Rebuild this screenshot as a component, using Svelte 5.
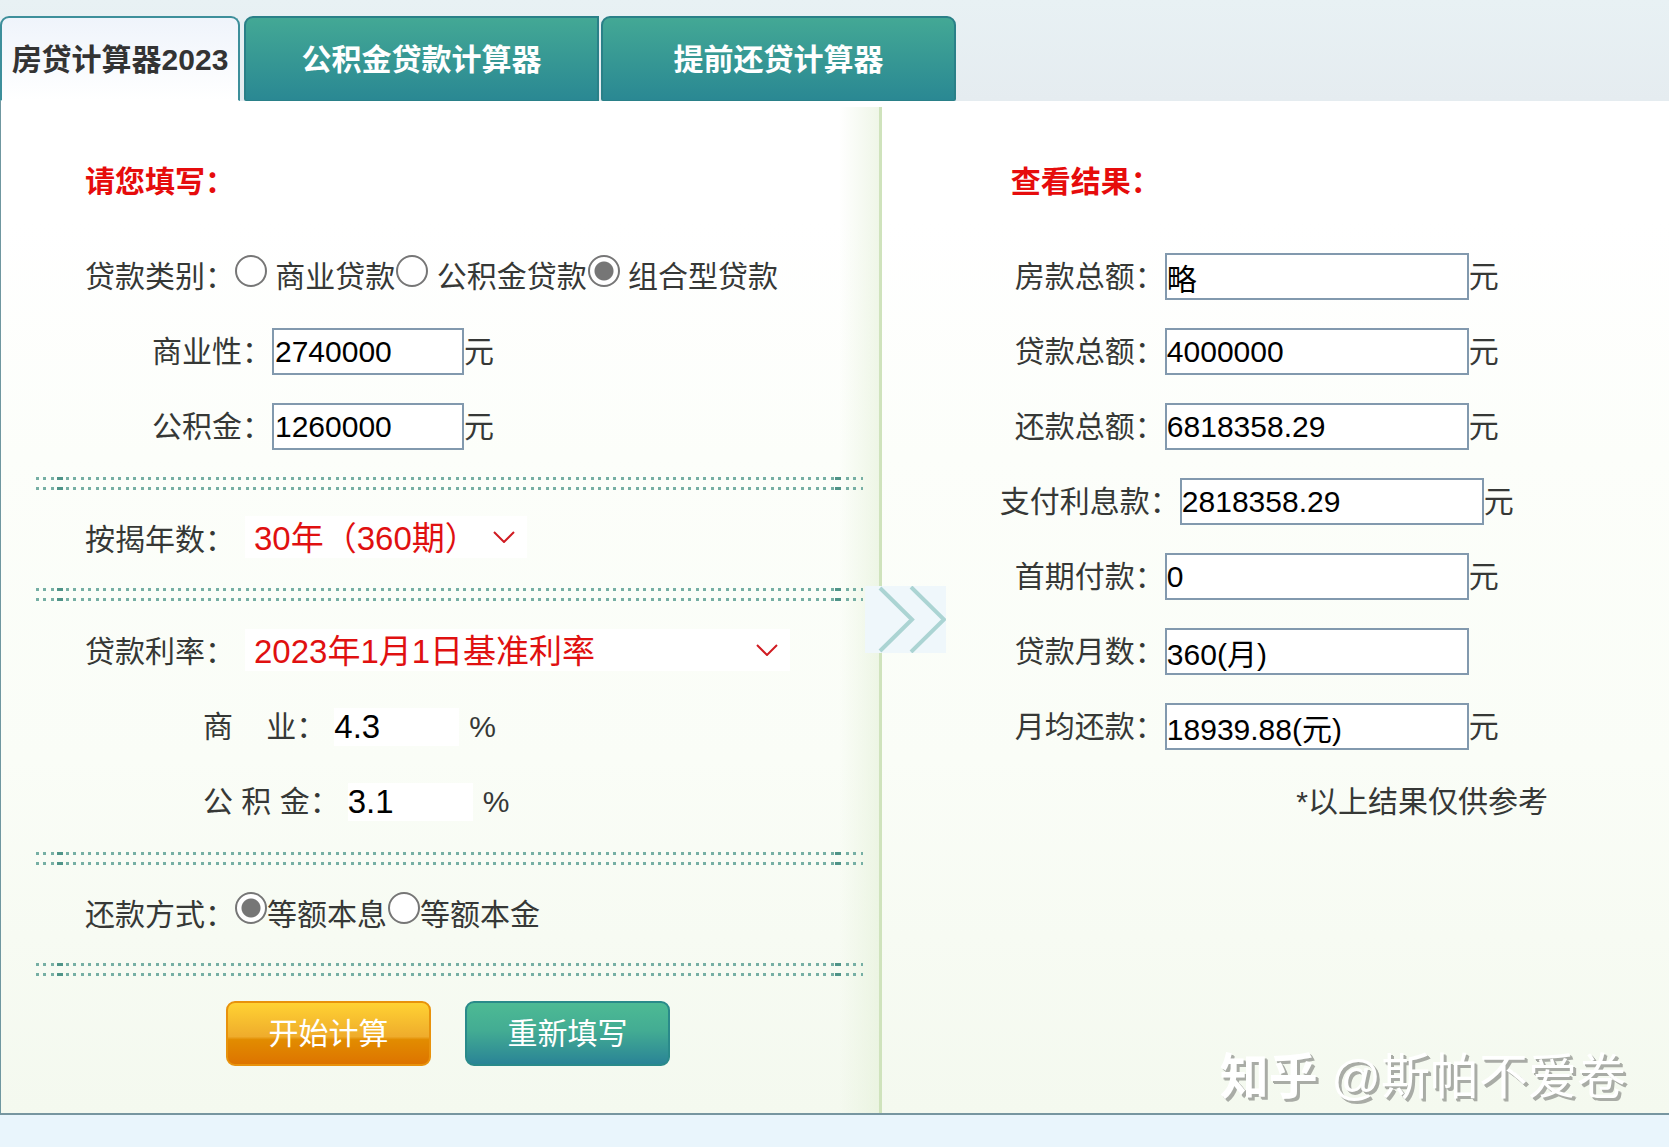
<script>
  const tabs = ['房贷计算器2023', '公积金贷款计算器', '提前还贷计算器'];
  const loanTypes = ['商业贷款', '公积金贷款', '组合型贷款'];
  const methods = ['等额本息', '等额本金'];
  const years = [30, 25, 20, 15, 10, 5];
  const rateSets = ['2023年1月1日基准利率', '2022年1月1日基准利率'];

  let active = $state(0);
  let loanType = $state('组合型贷款');
  let method = $state('等额本息');
  let term = $state(30);
  let rateSet = $state(rateSets[0]);
  let business = $state('2740000');
  let fund = $state('1260000');
  let businessRate = $state('4.3');
  let fundRate = $state('3.1');

  let results = $state([
    { id: 'house', label: '房款总额', value: '略', unit: '元' },
    { id: 'loan', label: '贷款总额', value: '4000000', unit: '元' },
    { id: 'repay', label: '还款总额', value: '6818358.29', unit: '元' },
    { id: 'interest', label: '支付利息款', value: '2818358.29', unit: '元' },
    { id: 'first', label: '首期付款', value: '0', unit: '元' },
    { id: 'months', label: '贷款月数', value: '360(月)', unit: '' },
    { id: 'monthly', label: '月均还款', value: '18939.88(元)', unit: '元' }
  ]);

  // total paid back over n months
  function total(sum, rate, n) {
    const r = rate / 1200;
    if (!r) return sum;
    if (method === '等额本金') return sum + (sum * r * (n + 1)) / 2;
    const k = Math.pow(1 + r, n);
    return (sum * r * k * n) / (k - 1);
  }

  function calculate(e) {
    e.preventDefault();
    const n = term * 12;
    const b = loanType === '公积金贷款' ? 0 : Number(business) || 0;
    const f = loanType === '商业贷款' ? 0 : Number(fund) || 0;
    const all = total(b, Number(businessRate), n) + total(f, Number(fundRate), n);
    results[1].value = String(b + f);
    results[2].value = all.toFixed(2);
    results[3].value = (all - b - f).toFixed(2);
    results[5].value = `${n}(月)`;
    results[6].value = `${(all / n).toFixed(2)}(元)`;
  }

  function clear() {
    business = '';
    fund = '';
    for (const r of results) r.value = '';
  }
</script>

{#snippet chevron()}
  <svg class="chevron" viewBox="0 0 22 12" aria-hidden="true"><path d="M1 1l10 10L21 1" /></svg>
{/snippet}

<div class="page">
  <nav class="tabs">
    {#each tabs as tab, i}
      <button type="button" class="tab" class:active={active === i} onclick={() => (active = i)}>{tab}</button>
    {/each}
  </nav>

  <main class="panels">
    <form class="fill" onsubmit={calculate}>
      <h2>请您填写：</h2>

      <div class="row" role="radiogroup" aria-label="贷款类别">
        <span>贷款类别：</span>
        {#each loanTypes as t}
          <label class="choice"><input type="radio" name="type" value={t} bind:group={loanType} />&nbsp;{t}</label>
        {/each}
      </div>
      <div class="row sub">
        <label for="business">商业性：</label>
        <input class="box" id="business" type="text" bind:value={business} />
        <span>元</span>
      </div>
      <div class="row sub">
        <label for="fund">公积金：</label>
        <input class="box" id="fund" type="text" bind:value={fund} />
        <span>元</span>
      </div>

      <div class="dots"></div>

      <div class="row short">
        <label for="years">按揭年数：</label>
        <div class="pick">
          <select id="years" bind:value={term}>
            {#each years as y}<option value={y}>{y}年（{y * 12}期）</option>{/each}
          </select>
          {@render chevron()}
        </div>
      </div>

      <div class="dots"></div>

      <div class="row">
        <label for="rates">贷款利率：</label>
        <div class="pick wide">
          <select id="rates" bind:value={rateSet}>
            {#each rateSets as r}<option value={r}>{r}</option>{/each}
          </select>
          {@render chevron()}
        </div>
      </div>
      <div class="row rate">
        <label for="business-rate">商&nbsp;&nbsp;&nbsp;&nbsp;业：</label>
        <input class="plain" id="business-rate" type="text" bind:value={businessRate} />
        <span>%</span>
      </div>
      <div class="row rate">
        <label for="fund-rate">公&nbsp;积&nbsp;金：</label>
        <input class="plain" id="fund-rate" type="text" bind:value={fundRate} />
        <span>%</span>
      </div>

      <div class="dots"></div>

      <div class="row short" role="radiogroup" aria-label="还款方式">
        <span>还款方式：</span>
        {#each methods as m}
          <label class="choice"><input type="radio" name="method" value={m} bind:group={method} />{m}</label>
        {/each}
      </div>

      <div class="dots"></div>

      <div class="actions">
        <button type="submit" class="btn go">开始计算</button>
        <button type="button" class="btn" onclick={clear}>重新填写</button>
      </div>
    </form>

    <section class="results">
      <h2>查看结果：</h2>
      {#each results as r (r.id)}
        <div class="row">
          <label for={r.id}>{r.label}：</label>
          <input class="box" id={r.id} type="text" readonly value={r.value} />
          <span class="unit">{r.unit}</span>
        </div>
      {/each}
      <p class="note">*以上结果仅供参考</p>
    </section>

    <svg class="arrows" viewBox="0 0 81 67" aria-hidden="true">
      <path d="M15 2l32 31.500L15 65" />
      <path d="M46 1l33 32.500L46 66" />
    </svg>

    <div class="watermark"><b>知乎</b> @斯帕不爱卷</div>
  </main>

  <footer></footer>
</div>

<style>
  :global(body) { margin: 0; }

  .page {
    min-height: 100vh;
    display: flex; flex-direction: column;
    font: 30px/45px 'Liberation Sans', 'Noto Sans CJK SC', sans-serif;
    color: #363836;
  }
  button, input, select { font-family: inherit; line-height: inherit; box-sizing: border-box; margin: 0; }

  /* tabs */
  .tabs {
    display: flex;
    padding-top: 16px;
    background: linear-gradient(#e8f1f4, #e5ecf0);
  }
  .tab {
    width: 355px; height: 85px;
    margin-right: 2px;
    padding: 0;
    border: 2px solid #2a8088;
    border-bottom-width: 1px;
    border-radius: 9px 0 0 2px;
    background: linear-gradient(#43a895, #2a8893);
    color: #fff;
    font-size: 30px; font-weight: bold;
    cursor: pointer;
  }
  .tab:last-child { border-radius: 9px 9px 2px 2px; }
  .tab.active {
    width: 240px;
    margin-right: 4px;
    border-color: #3d8f9b; border-bottom-color: #fff;
    border-radius: 9px 9px 0 0;
    background: linear-gradient(#eff4fb, #fff);
    color: #333;
  }

  /* panels */
  .panels {
    position: relative;
    display: grid; grid-template-columns: 66fr 59fr;
    border-left: 1px solid #6f97a0;
    border-bottom: 2px solid #7796a0;
    background: linear-gradient(#fff, #fff 12%, #fcfefa 35%, #fafdf7 65%, #f4f9ef);
  }
  .fill {
    padding: 43px 3px 47px 0;
    background:
      linear-gradient(#cfe3bc, #cfe3bc) right 0 top 6px / 3px 100% no-repeat,
      linear-gradient(to right, rgba(228, 242, 216, 0), rgba(228, 240, 216, 0.6)) right 3px top 6px / 40px 100% no-repeat;
  }
  .results { padding: 43px 37px 0 0; }

  h2 {
    margin: 0 0 20px 84px;
    font-size: 30px; line-height: 75px;
    color: #e60c0c;
  }
  .results h2 { margin-left: 129px; }

  .row {
    display: flex; align-items: center;
    height: 75px;
    padding-left: 84px;
    white-space: nowrap;
  }
  .row.short { height: 72px; }
  .row.sub { padding-left: 151px; }
  .row.rate { padding-left: 202px; }
  .results .row { justify-content: center; padding-left: 0; }
  .unit { width: 30px; }

  .box {
    width: 192px; height: 47px;
    padding: 0 1px;
    border: 2px solid #8299ae;
    background: #fff;
    color: #000;
    font-size: 30px; line-height: 34px;
  }
  .results .box { width: 304px; padding: 0; }
  .plain {
    width: 125px; height: 38px;
    margin: 0 10px 0 8px;
    padding: 0;
    border: none;
    background: #fff;
    color: #000;
    font-size: 33px; line-height: 38px;
  }

  .choice { display: flex; align-items: center; }
  input[type='radio'] {
    appearance: none;
    width: 32px; height: 32px;
    margin: 0 0 12px;
    border: 2px solid #767676;
    border-radius: 50%;
    background: #fff;
  }
  .choice + .choice { margin-left: 1px; }
  input[type='radio']:checked { background: radial-gradient(circle, #767676 9px, #fff 10px); }

  .pick { position: relative; width: 282px; margin: 0 0 4px 10px; }
  .pick.wide { width: 545px; }
  .pick select {
    display: block;
    appearance: none;
    width: 100%; height: 42px;
    padding: 0 9px;
    border: none;
    background: #fff;
    color: #e01010;
    font-size: 33px;
  }
  .chevron {
    position: absolute; right: 12px; top: 15px;
    width: 22px; height: 12px;
    fill: none; stroke: #d01c22; stroke-width: 2;
    pointer-events: none;
  }

  /* double dotted rule, with a longer dash near both ends */
  .dots {
    height: 39px;
    margin: 0 16px 0 35px;
    --d: #76afa4;
    background:
      linear-gradient(#4f9488, #4f9488) left 21px top 13px / 6px 3px no-repeat,
      linear-gradient(#4f9488, #4f9488) left 21px top 23px / 6px 3px no-repeat,
      linear-gradient(#4f9488, #4f9488) right 22px top 13px / 6px 3px no-repeat,
      linear-gradient(#4f9488, #4f9488) right 22px top 23px / 6px 3px no-repeat,
      linear-gradient(to right, var(--d) 3px, transparent 3px 7px, var(--d) 7px 10px, transparent 10px) left 0 top 13px / 15px 3px repeat-x,
      linear-gradient(to right, var(--d) 3px, transparent 3px 7px, var(--d) 7px 10px, transparent 10px) left 0 top 23px / 15px 3px repeat-x;
  }

  .actions { display: flex; gap: 34px; padding: 12px 0 0 225px; }
  .btn {
    width: 205px; height: 65px;
    padding: 0;
    border: 2px solid #2a8a8a;
    border-radius: 9px;
    background: linear-gradient(#4dba94, #43ac93 45%, #2a8496);
    color: #fff;
    font-size: 30px;
    cursor: pointer;
  }
  .btn.go {
    border-color: #e8920c;
    background: linear-gradient(#ffd233, #efac2c 55%, #e28c00 60%, #dd7400);
  }

  .note {
    margin: 0;
    padding-right: 84px;
    line-height: 75px;
    text-align: right;
  }

  .arrows {
    position: absolute; left: calc(66 / 125 * 100% - 17px); top: 485px;
    width: 81px; height: 67px;
    background: #eff7fb;
    fill: none; stroke: #abd4d3; stroke-width: 4;
  }

  .watermark {
    position: absolute; right: 43px; bottom: 6px;
    font-size: 49px; line-height: 60px;
    color: #fff;
    text-shadow: 2px 2px 0 #a9aca6, 3px 3px 0 #a9aca6;
    pointer-events: none;
  }

  footer { flex: 1; min-height: 32px; background: #e9f5fc; }
</style>
